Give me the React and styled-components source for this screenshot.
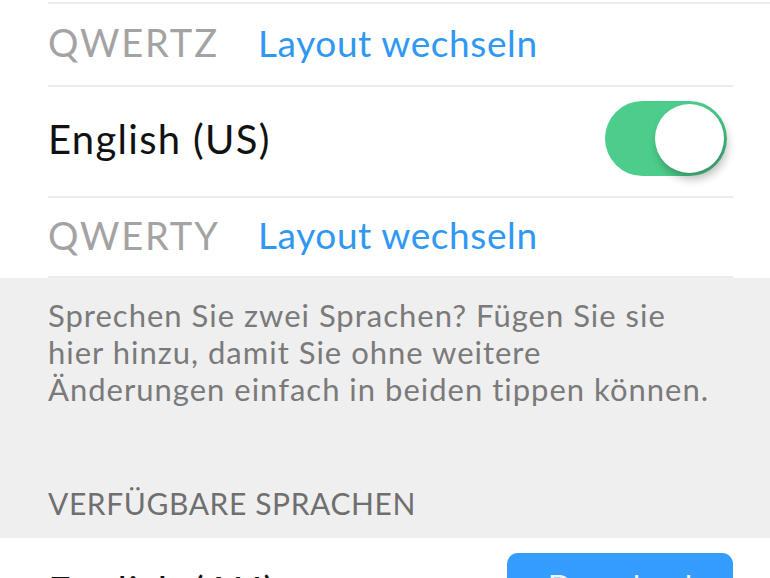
import React from "react";
import styled, { createGlobalStyle } from "styled-components";

const Global = createGlobalStyle`
  html, body { margin: 0; padding: 0; background: #ffffff; }
  body { font-family: Lato, "Open Sans", sans-serif; -webkit-font-smoothing: antialiased; }
  * { box-sizing: border-box; }
`;

const Page = styled.div`
  width: 770px;
  height: 578px;
  overflow: hidden;
  display: flex;
  flex-direction: column;
  background: #ffffff;
`;

const List = styled.div`
  display: flex;
  flex-direction: column;
  padding-left: 48px;
  padding-top: 2px;
  background: #ffffff;
`;

const Row = styled.div`
  display: flex;
  align-items: center;
  height: ${(p) => p.$h}px;
  border-top: 2px solid #ececf0;
  border-bottom: ${(p) => (p.$last ? "2px solid #ececf0" : "none")};
  margin-right: ${(p) => (p.$full ? 0 : 37)}px;
  padding-right: ${(p) => (p.$full ? 37 : 0)}px;
  padding-bottom: 5px;
  gap: 40px;
`;

const LayoutName = styled.span`
  font-size: 38px;
  color: #a3a3a3;
  letter-spacing: 1.9px;
  width: 170px;
`;

const LinkText = styled.a`
  font-size: 37px;
  color: #2f98f2;
  text-decoration: none;
  letter-spacing: 0.6px;
`;

const LangName = styled.span`
  flex: 1;
  font-size: 40px;
  color: #111111;
  letter-spacing: 1.3px;
`;

const Toggle = styled.div`
  position: relative;
  width: 122px;
  height: 75px;
  border-radius: 38px;
  background: #4ccd8b;
  margin-right: 6px;
  margin-top: -1px;
`;

const Knob = styled.div`
  position: absolute;
  top: 3px;
  right: 3px;
  width: 69px;
  height: 69px;
  border-radius: 50%;
  background: #ffffff;
  box-shadow: 3px 6px 10px rgba(0, 0, 0, 0.28);
`;

const Note = styled.div`
  background: #efefef;
  padding: 19px 48px 16px;
  display: flex;
  flex-direction: column;
  gap: 77px;
`;

const Paragraph = styled.p`
  margin: 0;
  font-size: 31px;
  line-height: 37px;
  color: #7a7a7a;
  letter-spacing: 1px;
`;

const SectionHeader = styled.div`
  font-size: 30px;
  line-height: 37px;
  color: #6f6f6f;
  letter-spacing: 0.6px;
`;

const AvailRow = styled.div`
  display: flex;
  align-items: center;
  padding: 15px 37px 0 48px;
  background: #ffffff;
`;

const DownloadButton = styled.button`
  width: 226px;
  height: 72px;
  border: none;
  border-radius: 11px;
  background: #349dff;
  color: #e9f4ff;
  font-family: Lato, sans-serif;
  font-size: 32px;
  padding: 0 0 6px;
`;

const AvailName = styled(LangName)`
  padding-top: 4px;
`;

export default function App() {
  return (
    <>
      <Global />
      <Page>
        <List>
          <Row $h={83} $full>
            <LayoutName>QWERTZ</LayoutName>
            <LinkText>Layout wechseln</LinkText>
          </Row>
          <Row $h={111}>
            <LangName>English (US)</LangName>
            <Toggle>
              <Knob />
            </Toggle>
          </Row>
          <Row $h={82} $last>
            <LayoutName>QWERTY</LayoutName>
            <LinkText>Layout wechseln</LinkText>
          </Row>
        </List>
        <Note>
          <Paragraph>
            Sprechen Sie zwei Sprachen? Fügen Sie sie
            <br />
            hier hinzu, damit Sie ohne weitere
            <br />
            Änderungen einfach in beiden tippen können.
          </Paragraph>
          <SectionHeader>VERFÜGBARE SPRACHEN</SectionHeader>
        </Note>
        <AvailRow>
          <AvailName>English (AU)</AvailName>
          <DownloadButton>Download</DownloadButton>
        </AvailRow>
      </Page>
    </>
  );
}
